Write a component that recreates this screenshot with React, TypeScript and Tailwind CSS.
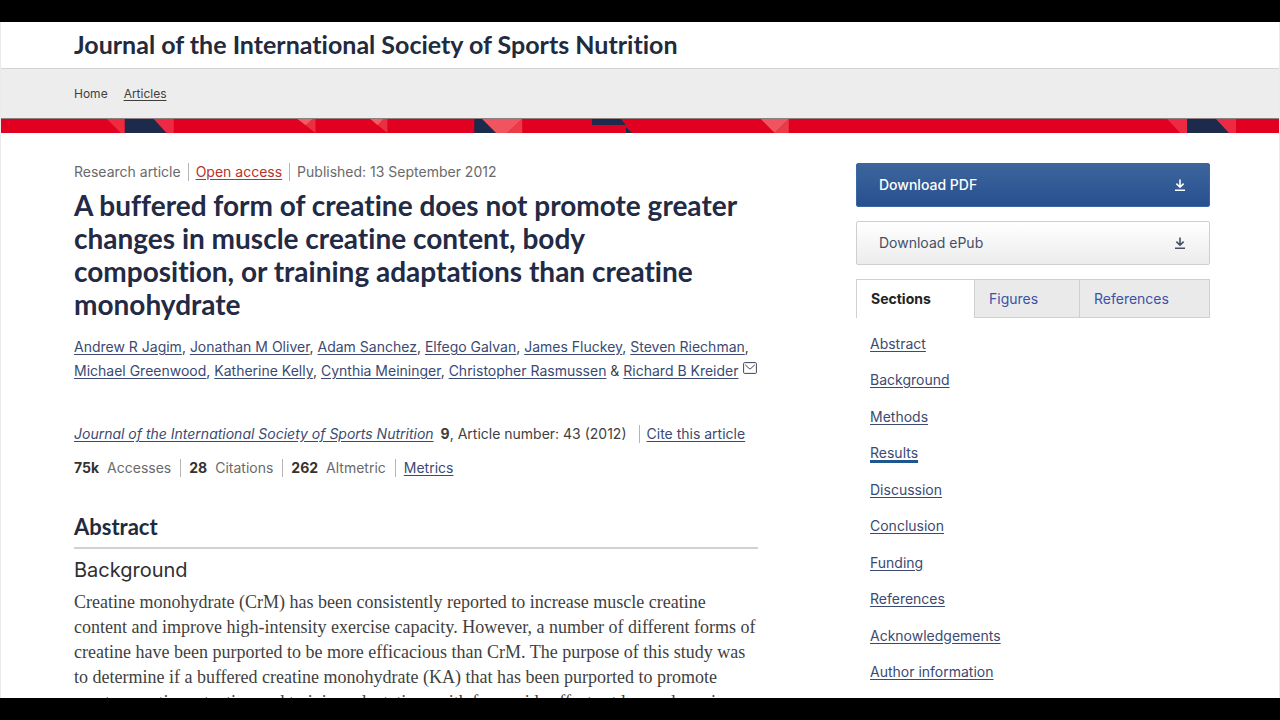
import { Fragment } from "react";
import clsx from "clsx";

const authors = [
  "Andrew R Jagim",
  "Jonathan M Oliver",
  "Adam Sanchez",
  "Elfego Galvan",
  "James Fluckey",
  "Steven Riechman",
  "Michael Greenwood",
  "Katherine Kelly",
  "Cynthia Meininger",
  "Christopher Rasmussen",
];

const metrics = [
  { value: "75k", label: "Accesses" },
  { value: "28", label: "Citations" },
  { value: "262", label: "Altmetric" },
];

const sections = [
  "Abstract",
  "Background",
  "Methods",
  "Results",
  "Discussion",
  "Conclusion",
  "Funding",
  "References",
  "Acknowledgements",
  "Author information",
];

const linkClass = "text-[#3b4a72] underline underline-offset-2";
const headingClass =
  "font-['Lato',sans-serif] font-bold [font-variant-ligatures:none]";

const DownloadIcon = () => (
  <svg
    viewBox="0 0 12 12"
    className="size-3"
    fill="none"
    stroke="currentColor"
    strokeWidth="1.6"
    aria-hidden="true"
  >
    <path d="M6 0.5V8M2.4 4.6L6 8.2L9.6 4.6M1 11.2H11" />
  </svg>
);

const MailIcon = () => (
  <svg
    viewBox="0 0 14 12"
    className="mb-2 ml-1 inline-block h-3 w-3.5 text-[#3f4658]"
    fill="none"
    stroke="currentColor"
    aria-hidden="true"
  >
    <rect x="0.6" y="0.6" width="12.8" height="10.8" rx="1" />
    <path d="M2.2 2.8L6.2 6.5Q7 7.1 7.8 6.5L11.8 2.8" />
  </svg>
);

const Banner = () => (
  <svg
    viewBox="0 0 1280 14"
    preserveAspectRatio="none"
    className="block h-3.5 w-full"
    aria-hidden="true"
  >
    <rect width="1280" height="14" fill="#e1001f" />
    <path d="M106 0H124V14H120Z" fill="#ee2a3c" />
    <path d="M124 0H153L166 14H124Z" fill="#1c2a4b" />
    <path d="M153 0H173V14H166Z" fill="#ee2a42" />
    <path d="M297 0H315V14Z" fill="#e92f40" />
    <path d="M297 0H312L305 6Z" fill="#ef5e60" />
    <path d="M370 0H387V14Z" fill="#e92f40" />
    <path d="M370 0H383L377 6Z" fill="#ef5e60" />
    <path d="M474 0H482L496 14H474Z" fill="#1c2a4b" />
    <path d="M482 0H522L507 14H496Z" fill="#f0555f" />
    <path d="M522 0V14H507Z" fill="#ec3b48" />
    <path d="M592 0H621L626 6H592Z" fill="#1c2a4b" />
    <path d="M621 0L631 10V14H626V6Z" fill="#c9102b" />
    <path d="M626 8L632 14H626Z" fill="#1c2a4b" />
    <path d="M761 0H789L775 14Z" fill="#f0555f" />
    <path d="M789 0V14H775Z" fill="#ec3b48" />
    <path d="M1168 0H1188V14H1181Z" fill="#ee2a42" />
    <path d="M1188 0H1217L1230 14H1188Z" fill="#1c2a4b" />
    <path d="M1217 0H1237V14H1230Z" fill="#ee2a42" />
  </svg>
);

const Header = () => (
  <header>
    <div className="flex h-[46px] items-center px-[73px] pb-0.5">
      <a
        href="#"
        className={clsx(headingClass, "text-[25px] leading-8 text-[#222a3d]")}
      >
        Journal of the International Society of Sports Nutrition
      </a>
    </div>
    <nav className="flex h-[51px] items-center gap-4 border-y border-t-[#d3d3d3] border-b-[#8c8080] bg-[#ededed] px-[73px] text-xs text-[#3f3f3f]">
      <a href="#">Home</a>
      <a href="#" className="underline underline-offset-2">
        Articles
      </a>
    </nav>
    <Banner />
  </header>
);

const Article = () => (
  <main className="min-w-0 flex-1">
    <ul className="flex items-center leading-[18px] text-[#6a6a6a]">
      <li className="border-r border-[#b5b5b5] pr-[7px]">Research article</li>
      <li className="border-r border-[#b5b5b5] px-[7px]">
        <a href="#" className="text-[#b8322a] underline underline-offset-2">
          Open access
        </a>
      </li>
      <li className="pl-[7px]">Published: 13 September 2012</li>
    </ul>
    <h1
      className={clsx(
        headingClass,
        "mt-2 text-[28px] leading-[33px] text-[#222a45]"
      )}
    >
      A buffered form of creatine does not promote greater
      <br />
      changes in muscle creatine content, body
      <br />
      composition, or training adaptations than creatine
      <br />
      monohydrate
    </h1>
    <p className="mt-3.5 leading-6 text-[#3f3f3f]">
      {authors.map((author, i) => (
        <Fragment key={author}>
          <a href="#" className={linkClass}>
            {author}
          </a>
          {i < authors.length - 1 ? ", " : " & "}
          {author === "Steven Riechman" && <br />}
        </Fragment>
      ))}
      <a href="#" className={linkClass}>
        Richard B Kreider
      </a>
      <MailIcon />
    </p>
    <p className="mt-[39px] flex items-center leading-6 whitespace-nowrap text-[#3f3f3f]">
      <a href="#" className={clsx(linkClass, "italic")}>
        Journal of the International Society of Sports Nutrition
      </a>
      <b className="ml-[7px]">9</b>, Article number: 43 (2012)
      <a
        href="#"
        className={clsx(
          linkClass,
          "ml-3 border-l border-[#b5b5b5] pl-[7px] leading-[18px]"
        )}
      >
        Cite this article
      </a>
    </p>
    <ul className="mt-[13px] flex items-center leading-[18px] text-[#6a6a6a]">
      {metrics.map(({ value, label }) => (
        <li key={label} className="mr-2 border-r border-[#b5b5b5] pr-[9px]">
          <b className="mr-2 text-[#333]">{value}</b>
          {label}
        </li>
      ))}
      <li>
        <a href="#" className={linkClass}>
          Metrics
        </a>
      </li>
    </ul>
    <h2
      className={clsx(
        headingClass,
        "mt-[35px] border-b-2 border-[#d2d2d2] pb-[5px] text-[22px] leading-[30px] text-[#222a3d]"
      )}
    >
      Abstract
    </h2>
    <h3 className="mt-[7px] text-xl text-[#2f2f2f]">Background</h3>
    <p className="mt-1.5 font-['Liberation_Serif',serif] text-lg leading-[25px] whitespace-nowrap text-[#3f3f3f]">
      Creatine monohydrate (CrM) has been consistently reported to increase
      muscle creatine
      <br />
      content and improve high-intensity exercise capacity. However, a number
      of different forms of
      <br />
      creatine have been purported to be more efficacious than CrM. The purpose
      of this study was
      <br />
      to determine if a buffered creatine monohydrate (KA) that has been
      purported to promote
      <br />
      greater creatine retention and training adaptations with fewer side
      effects at lower doses is
    </p>
  </main>
);

const Sidebar = () => (
  <aside className="w-[354px] shrink-0">
    <a
      href="#"
      className="flex h-11 items-center justify-between rounded-xs border border-[#3a66a3] bg-linear-to-b from-[#3d659b] to-[#28508f] pr-[23px] pl-[22px] font-medium text-white"
    >
      Download PDF
      <DownloadIcon />
    </a>
    <a
      href="#"
      className="mt-3.5 flex h-11 items-center justify-between rounded-xs border border-[#cfcfcf] bg-linear-to-b from-white to-[#ececec] pr-[23px] pl-[22px] text-[#444f66]"
    >
      Download ePub
      <DownloadIcon />
    </a>
    <div role="tablist" className="mt-3.5 flex h-[39px]">
      <button
        role="tab"
        aria-selected="true"
        className="w-[118px] border-t border-l border-[#d0d0d0] pl-3.5 text-left font-bold text-[#222]"
      >
        Sections
      </button>
      <button
        role="tab"
        aria-selected="false"
        className="w-[105px] border border-r-0 border-[#cfcfcf] bg-[#eaeaea] pl-3.5 text-left text-[#3b52a5]"
      >
        Figures
      </button>
      <button
        role="tab"
        aria-selected="false"
        className="flex-1 border border-[#cfcfcf] bg-[#eaeaea] pl-3.5 text-left text-[#3b52a5]"
      >
        References
      </button>
    </div>
    <ul className="mt-3.5 flex h-[351px] flex-col justify-between pl-3.5">
      {sections.map((section) => (
        <li key={section} className="leading-[23px]">
          <a
            href="#"
            className={clsx(
              linkClass,
              section === "Results" && "decoration-[#1f5590] decoration-3"
            )}
          >
            {section}
          </a>
        </li>
      ))}
    </ul>
  </aside>
);

const App = () => {
  return (
    <div className="h-screen overflow-hidden bg-black py-[22px] font-['Inter',sans-serif] text-sm">
      <div className="h-full overflow-hidden border-x border-[#ebebeb] bg-white">
        <Header />
        <div className="flex items-start justify-between gap-[98px] pt-[30px] pr-[69px] pl-[73px]">
          <Article />
          <Sidebar />
        </div>
      </div>
    </div>
  );
};

export default App;
